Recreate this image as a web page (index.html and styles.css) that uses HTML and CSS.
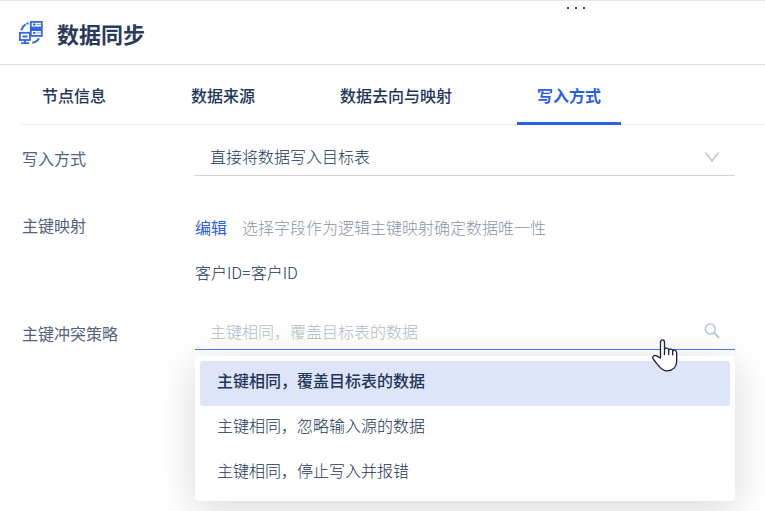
FILE: index.html
```html
<!DOCTYPE html>
<html lang="zh-CN">
<head>
    <meta charset="UTF-8">
    <meta name="viewport" content="width=device-width, initial-scale=1.0">
    <title>数据同步</title>
    <link rel="stylesheet" href="styles.css">
</head>
<body>
    <div class="panel">
        <div class="drag-handle">
            <span></span><span></span><span></span>
        </div>

        <header class="panel-header">
            <svg class="logo" viewBox="0 0 24 24" width="24" height="24" fill="none" stroke="#3567de" stroke-width="1.8">
                <rect x="11.800" y="0.900" width="11" height="14"/>
                <path d="M12 7.800h11" stroke-width="4.500"/>
                <path d="M14 3.500h2.500M14 11.900h2.500" stroke-width="1.800"/>
                <path d="M17.500 3.500h4M17.500 11.900h4" stroke-width="0.600"/>
                <rect x="0.900" y="11.800" width="10" height="7.200"/>
                <path d="M3.500 15.500h5M6 19v3.500M2 22.200h8.200"/>
                <path d="M2.200 9.200C3.200 5.700 5.800 2.900 9.500 2.200" stroke-width="2" stroke-dasharray="7.500 1"/>
                <path d="M13.200 21.800c2.800-.3 5.200-1.800 6.800-4.600" stroke-width="2"/>
            </svg>
            <h1>数据同步</h1>
        </header>

        <nav class="tabs" role="tablist">
            <button class="tab" type="button" role="tab">节点信息</button>
            <button class="tab" type="button" role="tab">数据来源</button>
            <button class="tab" type="button" role="tab">数据去向与映射</button>
            <button class="tab active" type="button" role="tab" aria-selected="true">写入方式</button>
        </nav>

        <form class="form">
            <label class="label" for="writeMode">写入方式</label>
            <div class="field">
                <select id="writeMode">
                    <option>直接将数据写入目标表</option>
                </select>
                <svg class="field-icon" viewBox="0 0 16 16" width="16" height="16" fill="none" stroke="#bcc2cc" stroke-width="1.3">
                    <path d="M1.500 3.500L8 12l6.500-8.500"/>
                </svg>
            </div>

            <span class="label mapping-label">主键映射</span>
            <div class="mapping">
                <p class="mapping-hint"><a href="#">编辑</a><span>选择字段作为逻辑主键映射确定数据唯一性</span></p>
                <p>客户ID=客户ID</p>
            </div>

            <label class="label conflict-label" for="conflict">主键冲突策略</label>
            <div class="combo">
                <div class="field focused">
                    <input id="conflict" type="text" placeholder="主键相同，覆盖目标表的数据">
                    <svg class="field-icon" viewBox="0 0 16 16" width="16" height="16" fill="none" stroke="#bcc2cc" stroke-width="1.4">
                        <circle cx="6.300" cy="6" r="5"/>
                        <path d="M10 9.700l5 5.300" stroke-width="1.800"/>
                    </svg>
                </div>
                <div class="dropdown" role="listbox">
                    <button class="option selected" type="button" role="option" aria-selected="true">主键相同，覆盖目标表的数据</button>
                    <button class="option" type="button" role="option">主键相同，忽略输入源的数据</button>
                    <button class="option" type="button" role="option">主键相同，停止写入并报错</button>
                </div>
                <svg class="pointer" viewBox="0 0 26 33" width="26" height="33" fill="#fff" stroke="#1c2138" stroke-width="1.3" stroke-linejoin="round" stroke-linecap="round">
                    <path d="M8.500 19V3.200c0-3 4-3 4 0V10c1.500-1.600 3.600-1 4.200.6 1.600-1 3.400-.5 4 1 1.700-.9 4-.1 4 2.200V22c0 6-4 9.800-9.300 9.800-4.600 0-6.800-2.300-9.200-5.500L1.200 20c-1.600-2.700 1.200-4.300 3.300-3.200z"/>
                    <path d="M12.500 10v5.500M16.700 10.600v5M20.700 11.600v4.200"/>
                </svg>
            </div>
        </form>
    </div>
</body>
</html>
```
FILE: styles.css
```css
* {
    margin: 0;
    padding: 0;
    box-sizing: border-box;
}

body {
    font-family: "Noto Sans CJK SC", sans-serif;
    font-size: 16px;
    font-weight: 300;
    line-height: 24px;
    color: #22355a;
    background: #fff;
}

button, input, select {
    font: inherit;
    color: inherit;
    background: none;
    border: none;
    outline: none;
}

a {
    color: #2b61e0;
    text-decoration: none;
}

.panel {
    position: relative;
    min-height: 100vh;
    border-top: 1px solid #e2e6f1;
    overflow: hidden;
}

.drag-handle {
    position: absolute;
    top: 6px;
    left: 567px;
    display: flex;
    gap: 6px;
}

.drag-handle span {
    width: 2px;
    height: 2px;
    background: #3a4868;
}

.panel-header {
    display: flex;
    align-items: center;
    gap: 14px;
    height: 64px;
    padding: 0 19px;
    border-bottom: 1px solid #d9dce8;
}

h1 {
    font-size: 22px;
    font-weight: 700;
    line-height: 32px;
    color: #2a3a5a;
}

.tabs {
    display: flex;
    gap: 45px;
    margin-left: 22px;
    border-bottom: 1px solid #ebecef;
}

.tab {
    height: 60px;
    margin-bottom: -1px;
    padding: 2px 20px 0;
    font-weight: 500;
    border-bottom: 3px solid transparent;
    cursor: pointer;
}

.tab.active {
    font-weight: 700;
    color: #2b61e0;
    border-bottom-color: #2b61e0;
}

.form {
    display: grid;
    grid-template-columns: 173px 1fr;
    padding: 13px 30px 10px 22px;
}

.label {
    padding-top: 8px;
    font-weight: 400;
    color: #53627d;
}

.mapping-label {
    padding-top: 37px;
}

.conflict-label {
    padding-top: 9px;
}

.field {
    display: flex;
    align-items: center;
    height: 38px;
    padding: 0 15px;
    border-bottom: 1px solid #d0d3da;
}

.field select,
.field input {
    flex: 1;
    min-width: 0;
    height: 37px;
    appearance: none;
}

.field select {
    padding-bottom: 2px;
}

.field input::placeholder {
    color: #b5bbc6;
    opacity: 1;
}

.field.focused {
    border-bottom-color: #4d7fdc;
}

.mapping {
    padding: 39px 0 28px;
}

.mapping-hint {
    margin-bottom: 21px;
    color: #8c95a7;
}

.mapping-hint a {
    margin-right: 15px;
    font-weight: 400;
}

.combo {
    position: relative;
}

.dropdown {
    position: relative;
    margin-top: 6px;
    padding: 5px;
    background: #fff;
    border-radius: 4px;
    box-shadow: 0 8px 40px rgba(0, 0, 0, 0.16);
}

.option {
    display: block;
    width: 100%;
    height: 45px;
    padding: 0 17px 8px;
    text-align: left;
    border-radius: 3px;
    cursor: pointer;
}

.option.selected {
    font-weight: 500;
    background: #dfe5f9;
}

.pointer {
    position: absolute;
    top: 27px;
    right: 57px;
}
```
